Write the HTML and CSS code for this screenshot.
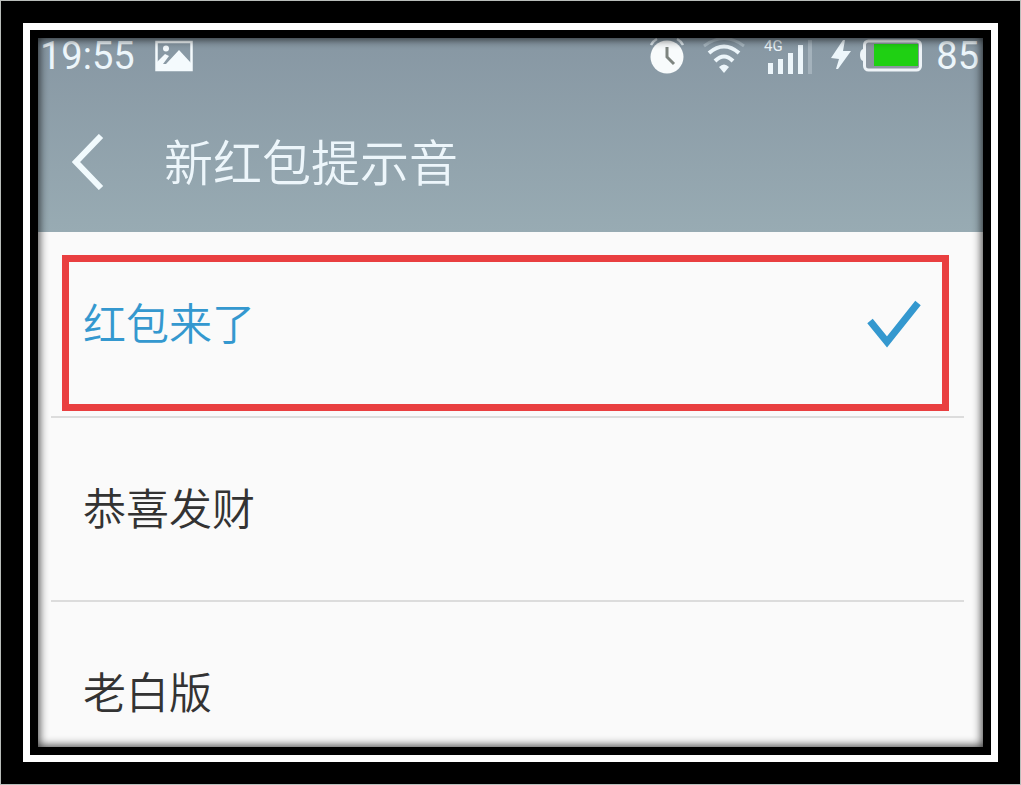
FILE: index.html
```html
<!DOCTYPE html>
<html lang="zh-CN">

<head>
    <meta charset="UTF-8">
    <meta name="viewport" content="width=device-width, initial-scale=1.0">
    <title>新红包提示音</title>
    <link rel="stylesheet" href="styles.css">
</head>

<body>

    <div class="frame">
        <div class="mat">
            <div class="screen">
                <header class="header">
                    <div class="status">
                        <span class="time">19:55</span>
                        <svg class="picture" width="38" height="38" viewBox="0 0 38 38">
                            <rect x="1.500" y="4" width="35" height="28" fill="none" stroke="#f4fafd" stroke-width="2.500" />
                            <circle cx="11" cy="10.500" r="3" fill="#f4fafd" />
                            <path d="M2 24L10 16L14 18L8 26L11 26L24 12L36 25V33H2Z" fill="#f4fafd" />
                        </svg>
                        <div class="icons">
                            <svg width="36" height="38" viewBox="0 0 36 38">
                                <circle cx="18" cy="19" r="16.500" fill="#f8fbfc" />
                                <path d="M2 7Q4 3 8 1M34 7Q32 3 28 1" fill="none" stroke="#dfe9ef" stroke-width="2.500" />
                                <path d="M18 9V19L25 26" fill="none" stroke="#7e8580" stroke-width="3" />
                            </svg>
                            <svg class="wifi" width="44" height="38" viewBox="0 0 44 38" fill="none" stroke="#edf6fb" stroke-width="4">
                                <path d="M2 8Q22 -7 42 8" stroke="#a9b8c2" stroke-width="3" />
                                <path d="M7 15Q22 2 37 15" />
                                <path d="M13 23Q22 14 31 23" />
                                <path d="M17 29Q22 24 27 29L22 35Z" fill="#edf6fb" stroke="none" />
                            </svg>
                            <svg class="signal" width="50" height="38" viewBox="0 0 50 38" fill="#edf6fb">
                                <text x="1" y="13" class="net">4G</text>
                                <rect x="5" y="25" width="5" height="11" />
                                <rect x="15" y="21" width="5" height="15" />
                                <rect x="25" y="15" width="5" height="21" />
                                <rect x="35" y="7" width="5" height="29" />
                                <rect x="45" y="2" width="4" height="34" fill="#a4b2bc" />
                            </svg>
                            <svg class="bolt" width="22" height="38" viewBox="0 0 22 38">
                                <path d="M13 2L1 20L9 21L6 31L8 31L21 13L13 13L15 2Z" fill="#edf6fb" />
                            </svg>
                            <svg class="battery" width="64" height="38" viewBox="0 0 64 38">
                                <rect x="4.500" y="3" width="56" height="29" rx="4" fill="#8b959f" stroke="#eef3f7" stroke-width="3" />
                                <path d="M3 11Q0 12 0 17Q0 22 3 23Z" fill="#eef3f7" />
                                <rect x="14" y="6" width="44" height="22" fill="#1fd013" />
                            </svg>
                            <span>85</span>
                        </div>
                    </div>
                    <div class="title">
                        <button class="back" type="button" aria-label="返回">
                            <svg width="32" height="56" viewBox="0 0 32 56">
                                <path d="M29 2L4 28L29 54" fill="none" stroke="#f1fafd" stroke-width="6" />
                            </svg>
                        </button>
                        <h1>新红包提示音</h1>
                    </div>
                </header>

                <ul class="sounds">
                    <li class="marked">
                        <label>
                            <span>红包来了</span>
                            <input type="radio" name="sound" checked>
                            <svg class="tick" width="54" height="48" viewBox="0 0 54 48">
                                <path d="M3 21L20 42L51 3" fill="none" stroke="#3498cf" stroke-width="7" />
                            </svg>
                        </label>
                    </li>
                    <li>
                        <label>
                            <span>恭喜发财</span>
                            <input type="radio" name="sound">
                            <svg class="tick" width="54" height="48" viewBox="0 0 54 48">
                                <path d="M3 21L20 42L51 3" fill="none" stroke="#3498cf" stroke-width="7" />
                            </svg>
                        </label>
                    </li>
                    <li>
                        <label>
                            <span>老白版</span>
                            <input type="radio" name="sound">
                            <svg class="tick" width="54" height="48" viewBox="0 0 54 48">
                                <path d="M3 21L20 42L51 3" fill="none" stroke="#3498cf" stroke-width="7" />
                            </svg>
                        </label>
                    </li>
                </ul>
            </div>
        </div>
    </div>

</body>

</html>
```
FILE: styles.css
```css
* {
    margin: 0;
    padding: 0;
    box-sizing: border-box;
}

body {
    font-family: Roboto, "Noto Sans CJK SC", sans-serif;
}

ul {
    list-style-type: none;
}

svg {
    display: block;
    flex: none;
}

/* picture frame: black, white, black */
.frame {
    display: flex;
    height: 100vh;
    padding: 22px;
    border: 1px solid #b9bdba;
    background-color: #000;
}

.mat {
    display: flex;
    flex: 1;
    min-width: 0;
    padding: 8px;
    border: 7px solid #fff;
}

.screen {
    position: relative;
    display: flex;
    flex-direction: column;
    flex: 1;
    min-width: 0;
    background-color: #fafafa;
}

/* shadow that the frame throws on the screen */
.screen::after {
    content: "";
    position: absolute;
    inset: 0;
    box-shadow: inset 0 0 10px 1px rgba(0, 0, 0, .8);
    pointer-events: none;
}

.header {
    flex: none;
    height: 194px;
    background-image: linear-gradient(#8797a3, #98abb3);
    color: #edf6fb;
}

.status {
    display: flex;
    height: 38px;
    padding: 0 4px 0 2px;
    font-size: 38px;
    line-height: 36px;
}

.picture {
    margin-left: 20px;
}

.icons {
    display: flex;
    margin-left: auto;
}

.wifi,
.signal,
.bolt {
    margin-left: 17px;
}

.battery {
    margin: 0 12px 0 8px;
}

.net {
    font-size: 15px;
}

.title {
    display: flex;
    align-items: center;
    height: 172px;
    padding: 0 34px;
}

.back {
    border: 0;
    background: none;
    cursor: pointer;
}

.title h1 {
    margin-left: 60px;
    padding-bottom: 6px;
    font-size: 49px;
    font-weight: 350;
}

.sounds {
    flex: 1;
    min-height: 0;
    padding: 0 19px 0 13px;
    overflow: hidden;
}

.sounds li {
    position: relative;
    height: 184px;
}

.sounds li + li {
    border-top: 2px solid #dcdcdc;
}

.sounds label {
    display: flex;
    align-items: center;
    justify-content: space-between;
    height: 100%;
    padding: 0 43px 0 32px;
    font-size: 43px;
    font-weight: 350;
    color: #333;
    cursor: pointer;
}

.sounds label:has(:checked) {
    color: #3498cf;
}

.sounds span {
    padding-bottom: 6px;
}

.sounds input {
    appearance: none;
    margin-left: auto;
}

.tick {
    visibility: hidden;
}

.sounds input:checked + .tick {
    visibility: visible;
}

/* red box round the chosen sound */
.marked::after {
    content: "";
    position: absolute;
    inset: 23px 15px 5px 11px;
    border: 7px solid #e93f40;
    pointer-events: none;
}
```
